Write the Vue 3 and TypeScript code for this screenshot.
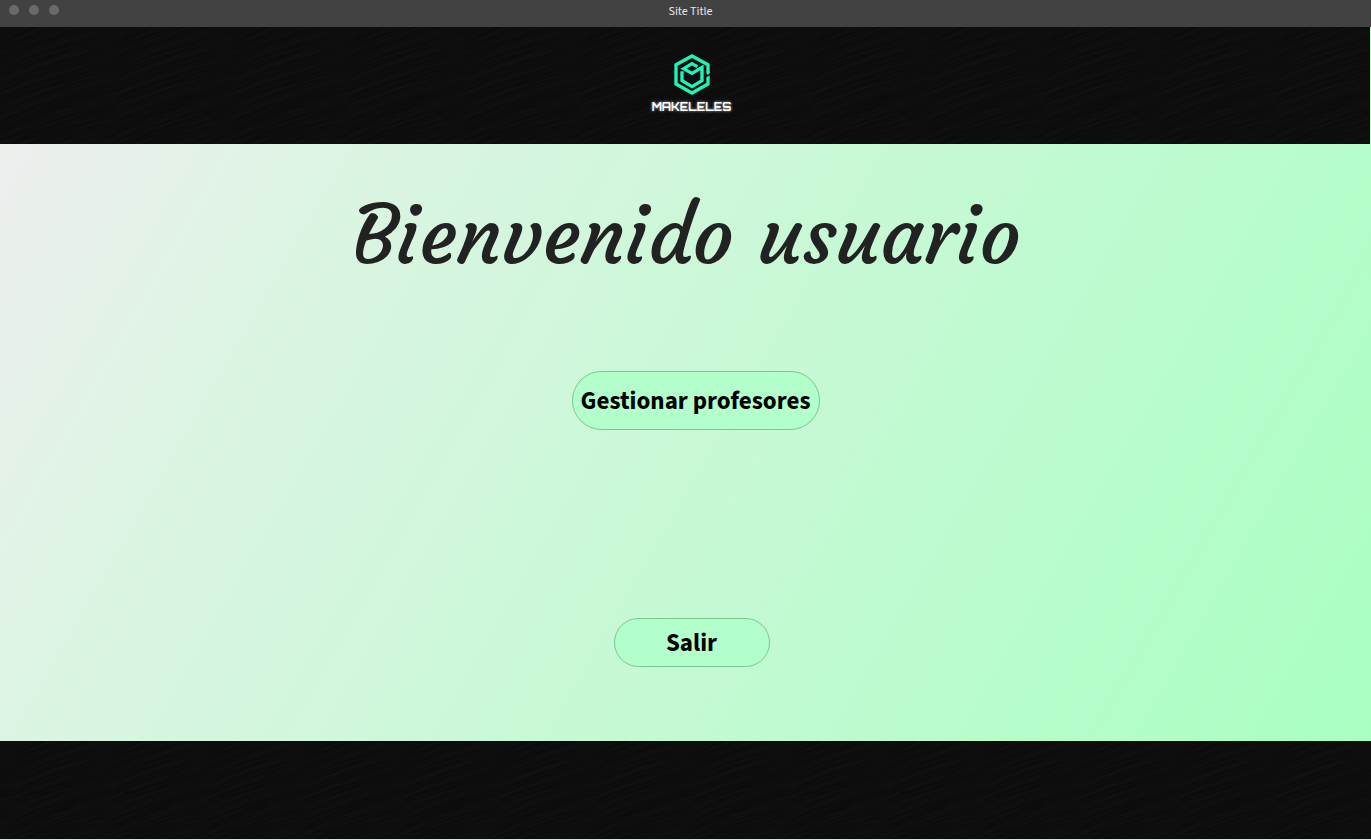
<script setup lang="ts">
interface Strand {
  d: string
  tone: string
  width: number
}

const tile = 116

function seeded(seed: number): () => number {
  let value = seed
  return () => {
    value = (value * 16807) % 2147483647
    return value / 2147483647
  }
}

const random = seeded(4127)
const strands: Strand[] = Array.from({ length: 80 }, (_, i) => {
  const y = Math.round(i * 2.2 + random() * 6) - 4
  const start = Math.round(random() * 70) - 40
  const length = 70 + Math.round(random() * 70)
  const end = start + length
  const rise = Math.round(length * 0.36)
  return {
    d: `M${start} ${y}Q${start + Math.round(length * 0.45)} ${y - Math.round(rise * 0.62)} ${end} ${y - rise}`,
    tone: i % 3 === 0 ? '#111111' : '#0a0a0a',
    width: 1,
  }
})
</script>

<template>
  <div class="window">
    <div class="titlebar">
      <div class="controls" aria-hidden="true"><span></span><span></span><span></span></div>
      <span class="site-title">Site Title</span>
    </div>

    <header class="band top">
      <svg class="texture" aria-hidden="true">
        <defs>
          <pattern id="strands-top" :width="tile" height="117" patternUnits="userSpaceOnUse">
            <rect :width="tile" height="117" fill="#0e0e0e" />
            <path v-for="(s, i) in strands" :key="i" :d="s.d" :stroke="s.tone" :stroke-width="s.width" fill="none" />
          </pattern>
        </defs>
        <rect width="100%" height="100%" fill="url(#strands-top)" />
      </svg>
      <div class="brand">
        <svg class="mark" viewBox="22 18 114 126" aria-hidden="true">
          <g fill="none" stroke="#20f5b8" stroke-width="10" stroke-linejoin="miter">
            <path d="M127 78V53L79 27L31 53V111L79 138L127 111V93" />
            <path d="M49 73V101L79 119L109 101V61L79 79L54 65L79 50L95 59" />
          </g>
          <path d="M122 79L132 73V79L126 84ZM122 94V91L132 85V94Z" fill="#20f5b8" />
        </svg>
        <span class="brand-name">MAKELELES</span>
      </div>
    </header>

    <main class="content">
      <h1>Bienvenido usuario</h1>
      <button type="button" class="manage">Gestionar profesores</button>
      <button type="button" class="exit">Salir</button>
    </main>

    <footer class="band bottom">
      <svg class="texture" aria-hidden="true">
        <defs>
          <pattern id="strands-bottom" x="14" width="97" height="98" patternUnits="userSpaceOnUse">
            <g transform="scale(0.84)">
              <rect :width="tile" height="117" fill="#0e0e0e" />
              <path v-for="(s, i) in strands" :key="i" :d="s.d" :stroke="s.tone" :stroke-width="s.width" fill="none" />
            </g>
          </pattern>
        </defs>
        <rect width="100%" height="100%" fill="url(#strands-bottom)" />
      </svg>
    </footer>
  </div>
</template>

<style>
body {
  margin: 0;
}
</style>

<style scoped>
.window {
  display: flex;
  flex-direction: column;
  box-sizing: border-box;
  min-height: 100vh;
  padding-bottom: 1px;
  background: #aaffc3;
  font-family: "Source Sans Pro", "Source Sans 3", "Noto Sans CJK SC", "Noto Sans", sans-serif;
}

.titlebar {
  display: flex;
  position: relative;
  align-items: center;
  justify-content: center;
  box-sizing: border-box;
  height: 27px;
  padding: 0 0 4px 10px;
  background: #424242;
}

.controls {
  display: flex;
  position: absolute;
  top: 5px;
  left: 9px;
  gap: 10px;
}

.controls span {
  width: 10px;
  height: 10px;
  border-radius: 50%;
  background: #6a6a6a;
}

.site-title {
  color: #e6e6e6;
  font-size: 12px;
  line-height: 16px;
}

.band {
  position: relative;
  overflow: hidden;
  background: #0d0d0d;
}

.texture {
  display: block;
  position: absolute;
  inset: 0;
  width: 100%;
  height: 100%;
}

.top {
  height: 117px;
  margin-right: 1px;
}

.bottom {
  height: 98px;
}

.brand {
  display: flex;
  position: relative;
  flex-direction: column;
  align-items: center;
  padding: 26px 0 0 13px;
}

.mark {
  width: 38px;
  height: 42px;
}

.brand-name {
  margin-top: 5px;
  color: #ffffff;
  font-family: Orbitron, "DejaVu Sans", sans-serif;
  font-size: 11px;
  font-weight: 700;
  line-height: 14px;
  text-shadow: 0 0 3px #bdbdbd;
}

.content {
  display: flex;
  flex: 1;
  flex-direction: column;
  align-items: center;
  padding: 42px 0 74px 12px;
  background: linear-gradient(120deg, #edeeed, #dcf4e3 20%, #a9ffc2);
}

h1 {
  margin: 0 10px 0 0;
  color: #222222;
  font-family: Courgette, Lato, sans-serif;
  font-size: 80px;
  font-weight: 400;
  line-height: 100px;
}

button {
  box-sizing: border-box;
  padding: 0;
  border: 1px solid #7cc491;
  border-radius: 30px;
  background: #b3ffcb;
  color: #000000;
  font-family: inherit;
  font-size: 25px;
  font-weight: 700;
  line-height: 36px;
  white-space: nowrap;
}

.manage {
  width: 248px;
  height: 59px;
  margin: 85px 0 0 8px;
}

.exit {
  width: 156px;
  height: 49px;
  margin-top: auto;
}
</style>
